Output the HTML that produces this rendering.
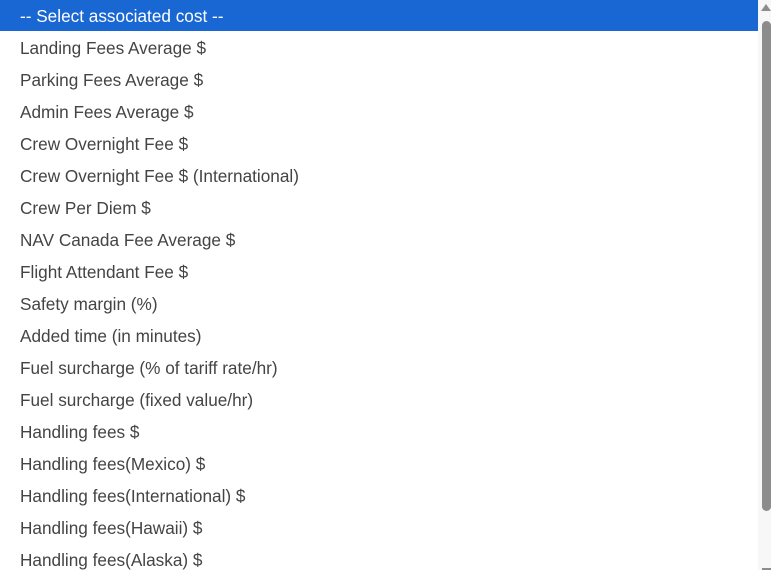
<!DOCTYPE html>
<html><head><style>
body{margin:0;width:771px;height:570px;overflow:hidden;background:#fff;font-family:"Liberation Sans",sans-serif;}
.list{position:absolute;left:0;top:0;width:758px;}
.r{height:31px;padding-top:1px;line-height:30px;padding-left:20px;font-size:17.2px;color:#444;white-space:nowrap;}
.r.s{background:#1967d2;color:#fff;height:30px;margin-bottom:1px;}
.track{position:absolute;left:758px;top:0;width:13px;height:570px;background:#f7f7f7;}
.thumb{position:absolute;left:762px;top:21px;width:9px;height:490px;background:#8c8c8c;border-radius:5px;}
.up{position:absolute;left:761px;top:4px;width:0;height:0;border-left:5px solid transparent;border-right:5px solid transparent;border-bottom:7px solid #8c8c8c;}
.dn{position:absolute;left:762px;top:568px;width:9px;height:2px;background:#8c8c8c;}
</style></head><body>
<div class="list">
<div class="r s">-- Select associated cost --</div>
<div class="r">Landing Fees Average $</div>
<div class="r">Parking Fees Average $</div>
<div class="r">Admin Fees Average $</div>
<div class="r">Crew Overnight Fee $</div>
<div class="r">Crew Overnight Fee $ (International)</div>
<div class="r">Crew Per Diem $</div>
<div class="r">NAV Canada Fee Average $</div>
<div class="r">Flight Attendant Fee $</div>
<div class="r">Safety margin (%)</div>
<div class="r">Added time (in minutes)</div>
<div class="r">Fuel surcharge (% of tariff rate/hr)</div>
<div class="r">Fuel surcharge (fixed value/hr)</div>
<div class="r">Handling fees $</div>
<div class="r">Handling fees(Mexico) $</div>
<div class="r">Handling fees(International) $</div>
<div class="r">Handling fees(Hawaii) $</div>
<div class="r">Handling fees(Alaska) $</div>
</div>
<div class="track"></div><div class="up"></div><div class="thumb"></div><div class="dn"></div>
</body></html>
